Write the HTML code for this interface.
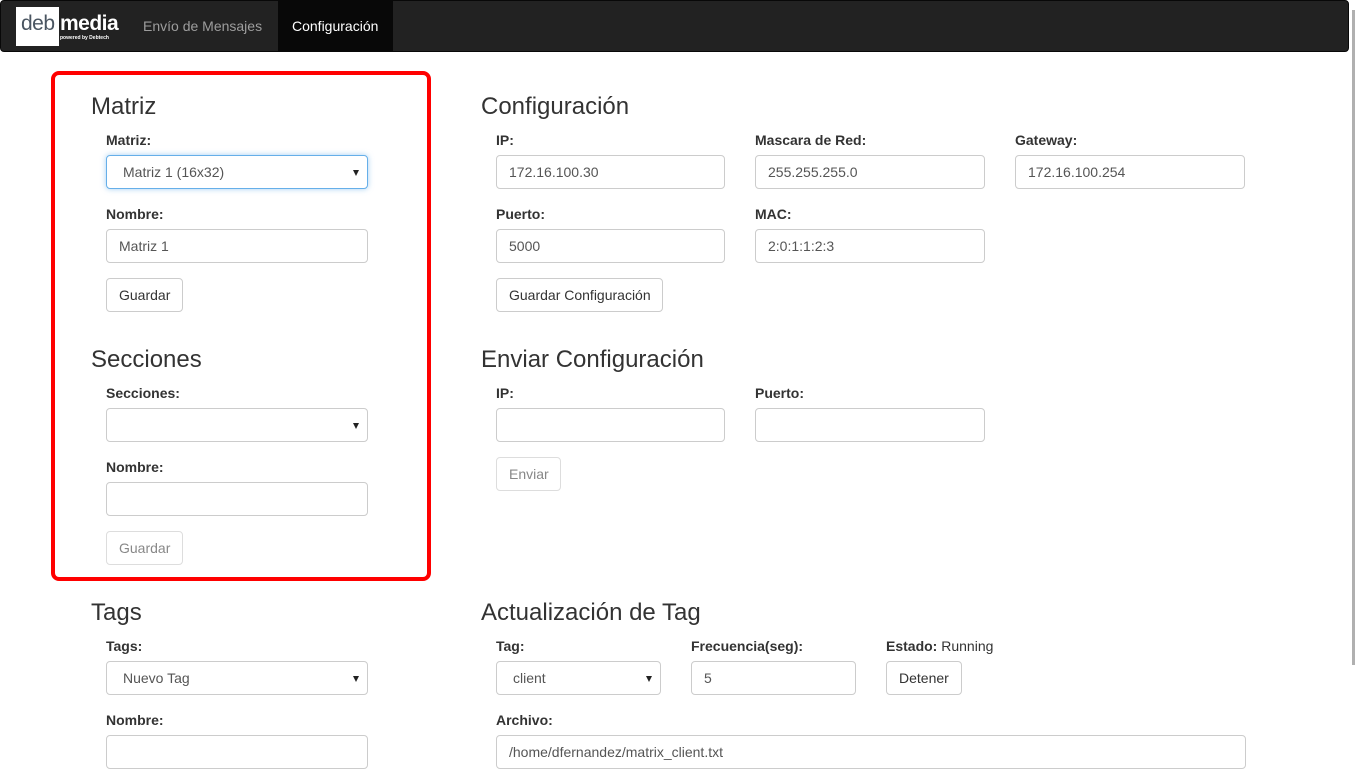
<!DOCTYPE html>
<html><head><meta charset="utf-8"><style>
*{box-sizing:border-box;margin:0;padding:0}
body{width:1355px;height:768px;overflow:hidden;background:#fff;font-family:"Liberation Sans",Arial,sans-serif;font-size:14px;color:#333;position:relative}
.a{position:absolute}
.nav{left:0;top:0;width:1349px;height:52px;background:#222;border:1px solid #080808;border-radius:4px}
.h{position:absolute;font-size:24px;font-weight:400;color:#333;line-height:26px}
.l{position:absolute;font-weight:bold;font-size:14px;line-height:16px;white-space:nowrap}
.i{position:absolute;height:34px;border:1px solid #ccc;border-radius:4px;background:#fff;padding:0 12px;line-height:32px;color:#555;font-size:14px;white-space:nowrap}
.s{padding-left:16px}
.s:after{content:"";position:absolute;right:8px;top:14px;border-left:3px solid transparent;border-right:3px solid transparent;border-top:6px solid #222}
.b{position:absolute;height:34px;border:1px solid #ccc;border-radius:4px;background:#fff;padding:0 12px;line-height:32px;color:#333;white-space:nowrap}
.d{color:#888;border-color:#ddd}
</style></head><body>
<div class="a nav"></div>
<div class="a" style="left:16px;top:7px;width:43px;height:39px;background:#fff"></div>
<div class="a" style="left:21px;top:13px;font-size:21px;color:#4a5561;line-height:22px;letter-spacing:-0.5px">deb</div>
<div class="a" style="left:60px;top:13px;font-size:21px;color:#fff;font-weight:bold;line-height:22px;letter-spacing:-0.5px">media</div>
<div class="a" style="left:60px;top:35px;font-size:5px;color:#fff;font-weight:bold;line-height:6px">powered by Debtech</div>
<div class="a" style="left:143px;top:17px;color:#9d9d9d;line-height:18px">Envío de Mensajes</div>
<div class="a" style="left:278px;top:1px;width:115px;height:50px;background:#080808"></div>
<div class="a" style="left:292px;top:17px;color:#fff;line-height:18px">Configuración</div>
<div class="a" style="left:1352px;top:10px;width:3px;height:655px;background:#b0b0b0"></div>

<div class="a" style="left:51px;top:71px;width:380px;height:510px;border:4px solid #f00;border-radius:8px"></div>

<div class="h" style="left:91px;top:94px">Matriz</div>
<div class="l" style="left:106px;top:132px">Matriz:</div>
<div class="i s" style="left:106px;top:155px;width:262px;border-color:#66afe9;box-shadow:0 0 6px rgba(102,175,233,.6)">Matriz 1 (16x32)</div>
<div class="l" style="left:106px;top:206px">Nombre:</div>
<div class="i" style="left:106px;top:229px;width:262px">Matriz 1</div>
<div class="b" style="left:106px;top:278px;width:77px">Guardar</div>

<div class="h" style="left:91px;top:347px">Secciones</div>
<div class="l" style="left:106px;top:385px">Secciones:</div>
<div class="i s" style="left:106px;top:408px;width:262px"></div>
<div class="l" style="left:106px;top:459px">Nombre:</div>
<div class="i" style="left:106px;top:482px;width:262px"></div>
<div class="b d" style="left:106px;top:531px;width:77px">Guardar</div>

<div class="h" style="left:91px;top:600px">Tags</div>
<div class="l" style="left:106px;top:638px">Tags:</div>
<div class="i s" style="left:106px;top:661px;width:262px">Nuevo Tag</div>
<div class="l" style="left:106px;top:712px">Nombre:</div>
<div class="i" style="left:106px;top:735px;width:262px"></div>

<div class="h" style="left:481px;top:94px">Configuración</div>
<div class="l" style="left:496px;top:132px">IP:</div>
<div class="i" style="left:496px;top:155px;width:229px">172.16.100.30</div>
<div class="l" style="left:755px;top:132px">Mascara de Red:</div>
<div class="i" style="left:755px;top:155px;width:230px">255.255.255.0</div>
<div class="l" style="left:1015px;top:132px">Gateway:</div>
<div class="i" style="left:1015px;top:155px;width:230px">172.16.100.254</div>
<div class="l" style="left:496px;top:206px">Puerto:</div>
<div class="i" style="left:496px;top:229px;width:229px">5000</div>
<div class="l" style="left:755px;top:206px">MAC:</div>
<div class="i" style="left:755px;top:229px;width:230px">2:0:1:1:2:3</div>
<div class="b" style="left:496px;top:278px;width:167px;padding:0 0 0 12px">Guardar Configuración</div>

<div class="h" style="left:481px;top:347px">Enviar Configuración</div>
<div class="l" style="left:496px;top:385px">IP:</div>
<div class="i" style="left:496px;top:408px;width:229px"></div>
<div class="l" style="left:755px;top:385px">Puerto:</div>
<div class="i" style="left:755px;top:408px;width:230px"></div>
<div class="b d" style="left:496px;top:457px;width:65px">Enviar</div>

<div class="h" style="left:481px;top:600px">Actualización de Tag</div>
<div class="l" style="left:496px;top:638px">Tag:</div>
<div class="i s" style="left:496px;top:661px;width:165px">client</div>
<div class="l" style="left:691px;top:638px">Frecuencia(seg):</div>
<div class="i" style="left:691px;top:661px;width:165px">5</div>
<div class="l" style="left:886px;top:638px">Estado: <span style="font-weight:normal">Running</span></div>
<div class="b" style="left:886px;top:661px;width:76px">Detener</div>
<div class="l" style="left:496px;top:712px">Archivo:</div>
<div class="i" style="left:496px;top:735px;width:750px">/home/dfernandez/matrix_client.txt</div>
</body></html>
